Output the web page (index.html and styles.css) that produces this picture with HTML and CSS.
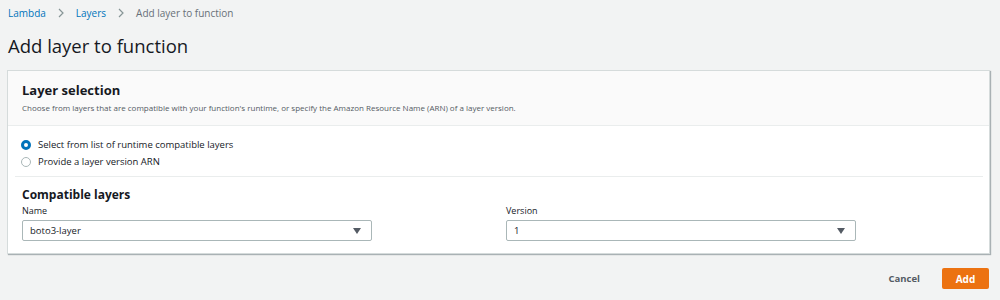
FILE: index.html
```html
<!DOCTYPE html>
<html>
<head>
<meta charset="utf-8">
<link rel="stylesheet" href="styles.css">
</head>
<body>
<div class="page">
  <nav class="crumbs">
    <a class="crumb-link">Lambda</a>
    <svg class="chev" width="8" height="10" viewBox="0 0 8 10"><path d="M2 1 L6 5 L2 9" fill="none" stroke="#879596" stroke-width="1.2"/></svg>
    <a class="crumb-link">Layers</a>
    <svg class="chev" width="8" height="10" viewBox="0 0 8 10"><path d="M2 1 L6 5 L2 9" fill="none" stroke="#879596" stroke-width="1.2"/></svg>
    <span class="crumb-current">Add layer to function</span>
  </nav>
  <h1 class="title">Add layer to function</h1>
  <section class="card">
    <header class="card-head">
      <h2 class="card-title">Layer selection</h2>
      <p class="card-desc">Choose from layers that are compatible with your function's runtime, or specify the Amazon Resource Name (ARN) of a layer version.</p>
    </header>
    <div class="card-body">
      <div class="radios">
        <label class="radio"><span class="dot checked"></span>Select from list of runtime compatible layers</label>
        <label class="radio"><span class="dot"></span>Provide a layer version ARN</label>
      </div>
      <div class="sep"></div>
      <h3 class="sub-title">Compatible layers</h3>
      <div class="fields">
        <div class="field">
          <div class="field-label">Name</div>
          <div class="select"><span>boto3-layer</span><span class="caret"></span></div>
        </div>
        <div class="field">
          <div class="field-label">Version</div>
          <div class="select"><span>1</span><span class="caret"></span></div>
        </div>
      </div>
    </div>
  </section>
  <div class="actions">
    <button class="btn-link">Cancel</button>
    <button class="btn-primary">Add</button>
  </div>
</div>
</body>
</html>
```
FILE: styles.css
```css
* { box-sizing: border-box; }
html, body { margin: 0; padding: 0; }
body {
  background: #f2f3f3;
  font-family: "Open Sans", "Liberation Sans", sans-serif;
  color: #16191f;
  width: 1000px;
  height: 300px;
  overflow: hidden;
}
.page { padding: 0 10px 0 7px; }
.crumbs {
  display: flex;
  align-items: center;
  gap: 8px;
  height: 26px;
  padding-left: 1px;
  font-size: 10px;
}
.crumb-link { color: #0073bb; }
.chev { margin: 0 3px; }
.crumb-current { color: #687078; }
.title {
  margin: 7px 0 0 1px;
  font-size: 18.5px;
  font-weight: 400;
  line-height: 26px;
  color: #16191f;
}
.card {
  margin-top: 11px;
  background: #fff;
  border: 1px solid #d5dbdb;
  box-shadow: 1px 1px 1px 0 rgba(0,28,36,0.3);
}
.card-head {
  background: #fafafa;
  border-bottom: 1px solid #eaeded;
  padding: 10px 14px 11px;
}
.card-title {
  margin: 0;
  font-size: 13px;
  font-weight: 700;
  line-height: 18px;
}
.card-desc {
  margin: 3px 0 0;
  font-size: 8px;
  line-height: 12px;
  color: #545b64;
}
.card-body { padding: 12px 6px 12px 7px; }
.radios { display: flex; flex-direction: column; gap: 4px; padding-left: 6px; }
.radio {
  display: flex;
  align-items: center;
  gap: 7px;
  font-size: 9.5px;
  line-height: 13px;
  color: #16191f;
}
.dot {
  width: 10px; height: 10px;
  border-radius: 50%;
  border: 1px solid #aab7b8;
  background: #fff;
}
.dot.checked {
  border: 3px solid #0073bb;
}
.sep { height: 1px; background: #eaeded; margin: 8px 0 10px; }
.sub-title {
  margin: 0 0 0 7px;
  font-size: 12px;
  font-weight: 700;
  line-height: 16px;
}
.fields {
  display: grid;
  grid-template-columns: 484px 350px;
  padding-left: 7px;
  margin-top: 1px;
}
.field-label { font-size: 9px; line-height: 13px; color: #16191f; margin-bottom: 3px; }
.select {
  width: 350px;
  height: 21px;
  border: 1px solid #aab7b8;
  border-radius: 2px;
  background: #fff;
  display: flex;
  align-items: center;
  justify-content: space-between;
  padding: 0 10px 0 7px;
  font-size: 9.5px;
  color: #16191f;
}
.caret {
  width: 0; height: 0;
  border-left: 4.5px solid transparent;
  border-right: 4.5px solid transparent;
  border-top: 6px solid #545b64;
}
.actions {
  display: flex;
  justify-content: flex-end;
  align-items: center;
  gap: 20px;
  margin-top: 14px;
  padding-right: 1px;
}
.btn-link {
  background: none; border: 0;
  font-family: inherit;
  font-size: 9.5px;
  font-weight: 700;
  color: #545b64;
  padding: 0 2px;
}
.btn-primary {
  background: #ec7211;
  border: 0;
  border-radius: 2px;
  color: #fff;
  font-family: inherit;
  font-size: 10px;
  font-weight: 700;
  width: 47px;
  height: 21px;
}
```
